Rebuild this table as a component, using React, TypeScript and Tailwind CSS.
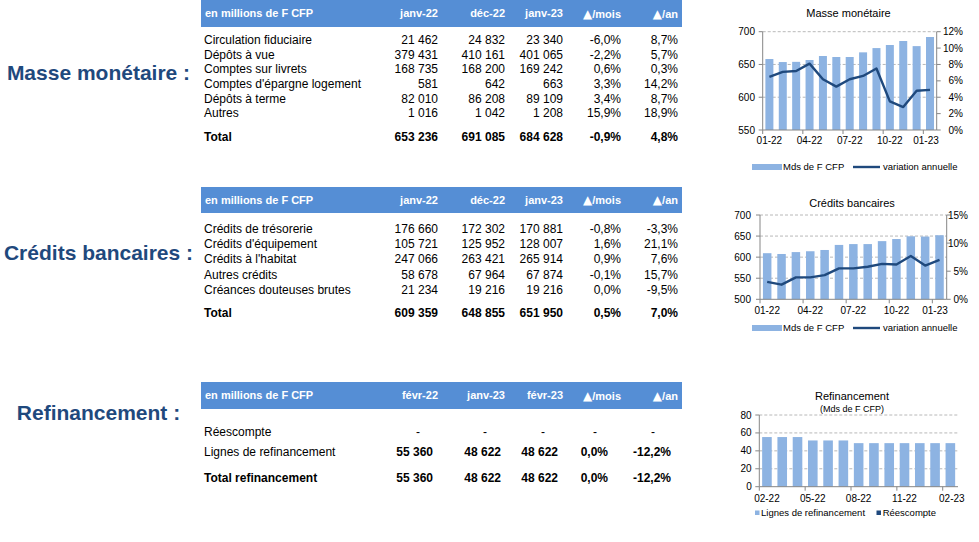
import React from 'react';

const GRID = 'grid grid-cols-[179px_58px_67px_58px_58px_57px] pr-[4px]';

type Row = { label: string; vals: string[] };

const MASSE: Row[] = [
  { label: 'Circulation fiduciaire', vals: ['21 462', '24 832', '23 340', '-6,0%', '8,7%'] },
  { label: 'Dépôts à vue', vals: ['379 431', '410 161', '401 065', '-2,2%', '5,7%'] },
  { label: 'Comptes sur livrets', vals: ['168 735', '168 200', '169 242', '0,6%', '0,3%'] },
  { label: "Comptes d'épargne logement", vals: ['581', '642', '663', '3,3%', '14,2%'] },
  { label: 'Dépôts à terme', vals: ['82 010', '86 208', '89 109', '3,4%', '8,7%'] },
  { label: 'Autres', vals: ['1 016', '1 042', '1 208', '15,9%', '18,9%'] },
];

const CREDITS: Row[] = [
  { label: 'Crédits de trésorerie', vals: ['176 660', '172 302', '170 881', '-0,8%', '-3,3%'] },
  { label: "Crédits d'équipement", vals: ['105 721', '125 952', '128 007', '1,6%', '21,1%'] },
  { label: "Crédits à l'habitat", vals: ['247 066', '263 421', '265 914', '0,9%', '7,6%'] },
  { label: 'Autres crédits', vals: ['58 678', '67 964', '67 874', '-0,1%', '15,7%'] },
  { label: 'Créances douteuses brutes', vals: ['21 234', '19 216', '19 216', '0,0%', '-9,5%'] },
];

const HEADS_A = ['janv-22', 'déc-22', 'janv-23', '▲/mois', '▲/an'];
const HEADS_B = ['févr-22', 'janv-23', 'févr-23', '▲/mois', '▲/an'];

// refinancement figures sit a little inside their columns
const REFI_PAD = ['pr-[5px]', 'pr-[4px]', 'pr-[5px]', 'pr-[13px]', 'pr-[7px]'];
const DASH_PAD = ['pr-[18px]', 'pr-[18px]', 'pr-[18px]', 'pr-[24px]', 'pr-[23px]'];

function HeadCell({ text }: { text: string }) {
  if (text.startsWith('▲')) {
    return (
      <div className="text-right whitespace-nowrap">
        <span className="text-[12px] font-['DejaVu_Sans',sans-serif] font-normal">▲</span>
        {text.slice(1)}
      </div>
    );
  }
  return <div className="text-right whitespace-nowrap">{text}</div>;
}

function Header({ heads, h }: { heads: string[]; h: string }) {
  return (
    <div className={`${GRID} ${h} items-center bg-[#558ED5] text-white text-[11px] font-bold`}>
      <div className="pl-[4px] whitespace-nowrap">en millions de F CFP</div>
      {heads.map((x) => (
        <HeadCell key={x} text={x} />
      ))}
    </div>
  );
}

function Line({ row, h, bold, pads }: { row: Row; h: string; bold?: boolean; pads?: string[] }) {
  return (
    <div className={`${GRID} ${h} items-center text-[12px] text-black ${bold ? 'font-bold' : ''}`}>
      <div className="pl-[3px] whitespace-nowrap">{row.label}</div>
      {row.vals.map((v, i) => (
        <div key={i} className={`text-right whitespace-nowrap ${pads ? pads[i] : ''}`}>{v}</div>
      ))}
    </div>
  );
}

type ChartProps = {
  w: number;
  h: number;
  title: string;
  subtitle?: string;
  cx: number;
  titleY: number;
  subY?: number;
  l: number;
  r: number;
  t: number;
  b: number;
  yMin: number;
  yMax: number;
  yStep: number;
  yEnd: number;
  y2?: { max: number; step: number; end: number };
  bars: number[];
  barW: number;
  line?: number[];
  labels: string[];
  labelY: number;
  lastShift?: number;
  children?: React.ReactNode;
};

function Chart(p: ChartProps) {
  const n = p.bars.length;
  const cw = (p.r - p.l) / n;
  const yS = (v: number) => p.b - ((v - p.yMin) / (p.yMax - p.yMin)) * (p.b - p.t);
  const ticks: number[] = [];
  for (let v = p.yMin; v <= p.yMax + 0.001; v += p.yStep) ticks.push(v);
  const ticks2: number[] = [];
  if (p.y2) for (let v = 0; v <= p.y2.max + 0.001; v += p.y2.step) ticks2.push(v);
  const y2S = (v: number) => p.b - (v / (p.y2 ? p.y2.max : 1)) * (p.b - p.t);
  const cxOf = (i: number) => p.l + (i + 0.5) * cw;

  return (
    <svg width={p.w} height={p.h} className="block" fontFamily="'Liberation Sans', Arial, sans-serif">
      <text x={p.cx} y={p.titleY} fontSize={11} textAnchor="middle" fill="#000">{p.title}</text>
      {p.subtitle && (
        <text x={p.cx} y={p.subY} fontSize={9} textAnchor="middle" fill="#000">{p.subtitle}</text>
      )}
      {ticks.slice(1).map((v) => (
        <line key={v} x1={p.l} x2={p.r} y1={yS(v)} y2={yS(v)} stroke="#A6A6A6" strokeWidth={0.8} strokeDasharray="3 2" />
      ))}
      {p.bars.map((v, i) => (
        <rect key={i} x={cxOf(i) - p.barW / 2} y={yS(v)} width={p.barW} height={p.b - yS(v)} fill="#8DB3E2" />
      ))}
      <line x1={p.l} x2={p.l} y1={p.t} y2={p.b} stroke="#868686" />
      <line x1={p.l} x2={p.r} y1={p.b} y2={p.b} stroke="#868686" />
      {ticks.map((v) => (
        <g key={v}>
          <line x1={p.l - 4} x2={p.l} y1={yS(v)} y2={yS(v)} stroke="#868686" />
          <text x={p.yEnd} y={yS(v) + 3.5} fontSize={10} textAnchor="end" fill="#000">{v}</text>
        </g>
      ))}
      {p.y2 && <line x1={p.r} x2={p.r} y1={p.t} y2={p.b} stroke="#868686" />}
      {p.y2 &&
        ticks2.map((v) => (
          <g key={v}>
            <line x1={p.r} x2={p.r + 4} y1={y2S(v)} y2={y2S(v)} stroke="#868686" />
            <text x={p.y2!.end} y={y2S(v) + 3.5} fontSize={10} textAnchor="end" fill="#000">{v}%</text>
          </g>
        ))}
      {[0, 3, 6, 9, 12].map((i) => (
        <line key={i} x1={p.l + i * cw} x2={p.l + i * cw} y1={p.b} y2={p.b + 4} stroke="#868686" />
      ))}
      {p.labels.map((s, k) => (
        <text
          key={s}
          x={cxOf(k * 3) - (k === 4 ? p.lastShift ?? 0 : 0)}
          y={p.labelY}
          fontSize={10}
          textAnchor="middle"
          fill="#000"
        >
          {s}
        </text>
      ))}
      {p.line && (
        <polyline
          points={p.line.map((v, i) => `${cxOf(i)},${y2S(v)}`).join(' ')}
          fill="none"
          stroke="#1F497D"
          strokeWidth={2.4}
          strokeLinejoin="round"
        />
      )}
      {p.children}
    </svg>
  );
}

function LegendBarLine({ y }: { y: number }) {
  return (
    <g fontSize={9.5} fill="#000">
      <rect x={32} y={y - 3} width={30} height={6} fill="#8DB3E2" />
      <text x={63} y={y + 3.3}>Mds de F CFP</text>
      <line x1={133} x2={160} y1={y} y2={y} stroke="#1F497D" strokeWidth={2.4} />
      <text x={163} y={y + 3.3}>variation annuelle</text>
    </g>
  );
}

function Title({ text, pt }: { text: string; pt: string }) {
  return (
    <div className={`w-[197px] shrink-0 text-center ${pt}`}>
      <span className="text-[21px] leading-[24px] font-bold text-[#1F497D] whitespace-nowrap">{text}</span>
    </div>
  );
}

export default function App() {
  return (
    <div className="w-[979px] h-[542px] bg-white overflow-hidden font-['Liberation_Sans',Arial,sans-serif]">
      {/* Masse monétaire */}
      <div className="flex h-[187px]">
        <Title text="Masse monétaire :" pt="pt-[61px]" />
        <div className="w-[481px] ml-[4px] shrink-0">
          <Header heads={HEADS_A} h="h-[27px]" />
          <div className="mt-[4px]">
            {MASSE.map((r) => (
              <Line key={r.label} row={r} h="h-[14.7px]" />
            ))}
          </div>
          <div className="mt-[9px]">
            <Line row={{ label: 'Total', vals: ['653 236', '691 085', '684 628', '-0,9%', '4,8%'] }} h="h-[14.7px]" bold />
          </div>
        </div>
        <div className="ml-[38px]">
          <Chart
            w={259}
            h={187}
            title="Masse monétaire"
            cx={128.5}
            titleY={16.5}
            l={42.7}
            r={216.7}
            t={31.7}
            b={130}
            yMin={550}
            yMax={700}
            yStep={50}
            yEnd={35}
            y2={{ max: 12, step: 2, end: 243 }}
            bars={[658.3, 653.7, 654, 656.8, 662.9, 661.4, 661.4, 668.5, 675, 679.7, 685.8, 678, 691.9]}
            barW={8}
            line={[6.5, 7.1, 7.2, 8.1, 6.2, 5.3, 6.2, 6.6, 7.5, 3.5, 2.8, 4.8, 4.9]}
            labels={['01-22', '04-22', '07-22', '10-22', '01-23']}
            labelY={144}
            lastShift={4}
          >
            <LegendBarLine y={167} />
          </Chart>
        </div>
      </div>

      {/* Crédits bancaires */}
      <div className="flex h-[195px]">
        <Title text="Crédits bancaires :" pt="pt-[54px]" />
        <div className="w-[481px] ml-[4px] shrink-0">
          <Header heads={HEADS_A} h="h-[26px]" />
          <div className="mt-[7px]">
            {CREDITS.map((r) => (
              <Line key={r.label} row={r} h="h-[15.2px]" />
            ))}
          </div>
          <div className="mt-[8px]">
            <Line row={{ label: 'Total', vals: ['609 359', '648 855', '651 950', '0,5%', '7,0%'] }} h="h-[15.2px]" bold />
          </div>
        </div>
        <div className="ml-[38px]">
          <Chart
            w={259}
            h={195}
            title="Crédits bancaires"
            cx={132}
            titleY={19.5}
            l={40}
            r={226.7}
            t={28}
            b={112.3}
            yMin={500}
            yMax={700}
            yStep={50}
            yEnd={31}
            y2={{ max: 15, step: 5, end: 248 }}
            bars={[609.4, 607.5, 612, 614, 617, 629, 631, 631, 638, 643, 649.5, 648.9, 652]}
            barW={8.5}
            line={[3.1, 2.6, 3.9, 3.9, 4.3, 5.5, 5.5, 5.8, 6.3, 6.2, 7.7, 6.0, 7.0]}
            labels={['01-22', '04-22', '07-22', '10-22', '01-23']}
            labelY={126.5}
            lastShift={4.5}
          >
            <LegendBarLine y={141} />
          </Chart>
        </div>
      </div>

      {/* Refinancement */}
      <div className="flex h-[160px]">
        <Title text="Refinancement :" pt="pt-[19px]" />
        <div className="w-[481px] ml-[4px] shrink-0">
          <Header heads={HEADS_B} h="h-[27px]" />
          <div className="mt-[13px]">
            <Line row={{ label: 'Réescompte', vals: ['-', '-', '-', '-', '-'] }} h="h-[20px]" pads={DASH_PAD} />
            <div className={`${GRID} h-[20px] items-center text-[12px] text-black`}>
              <div className="pl-[3px] whitespace-nowrap">Lignes de refinancement</div>
              {['55 360', '48 622', '48 622', '0,0%', '-12,2%'].map((v, i) => (
                <div key={i} className={`text-right font-bold whitespace-nowrap ${REFI_PAD[i]}`}>{v}</div>
              ))}
            </div>
          </div>
          <div className="mt-[6px]">
            <Line
              row={{ label: 'Total refinancement', vals: ['55 360', '48 622', '48 622', '0,0%', '-12,2%'] }}
              h="h-[20px]"
              bold
              pads={REFI_PAD}
            />
          </div>
        </div>
        <div className="ml-[38px]">
          <Chart
            w={259}
            h={160}
            title="Refinancement"
            subtitle="(Mds de F CFP)"
            cx={132}
            titleY={18}
            subY={29.5}
            l={39.3}
            r={238}
            t={33}
            b={104.7}
            yMin={0}
            yMax={80}
            yStep={20}
            yEnd={31.7}
            bars={[55.4, 55.4, 55.4, 51.6, 51.6, 51.6, 48.6, 48.6, 48.6, 48.6, 48.6, 48.6, 48.6]}
            barW={9.6}
            labels={['02-22', '05-22', '08-22', '11-22', '02-23']}
            labelY={119.5}
            lastShift={-1.5}
          >
            <g fontSize={9.5} fill="#000">
              <rect x={35} y={128.5} width={4.5} height={4.5} fill="#8DB3E2" />
              <text x={41} y={134}>Lignes de refinancement</text>
              <rect x={156.5} y={128.5} width={4.5} height={4.5} fill="#1F497D" />
              <text x={162.7} y={134}>Réescompte</text>
            </g>
          </Chart>
        </div>
      </div>
    </div>
  );
}
